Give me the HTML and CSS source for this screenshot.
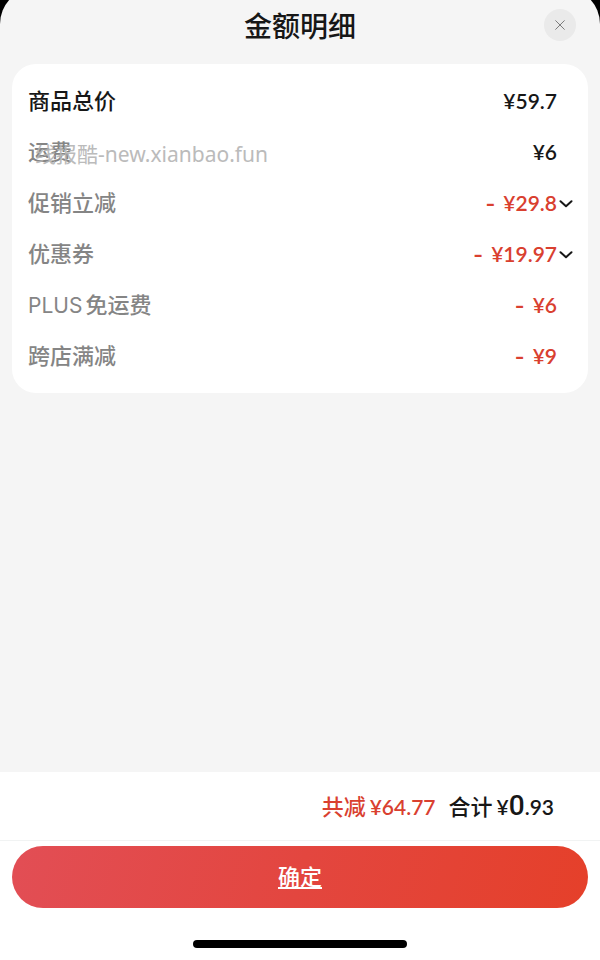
FILE: index.html
```html
<!DOCTYPE html>
<html lang="zh-CN">
<head>
<meta charset="utf-8">
<meta name="viewport" content="width=device-width, initial-scale=1">
<title>金额明细</title>
<link rel="stylesheet" href="styles.css">
</head>
<body>
<main class="sheet">
  <header class="header">
    <h1 class="title">金额明细</h1>
    <button class="close" type="button" aria-label="关闭">
      <svg width="10" height="10" viewBox="0 0 10 10"><path d="M.4.4l9.200 9.200M9.600.4L.4 9.600"/></svg>
    </button>
  </header>

  <dl class="card">
    <div class="row strong"><dt>商品总价</dt><dd>¥59.7</dd></div>
    <div class="row"><dt>运费</dt><dd>¥6</dd><span class="watermark">线报酷-new.xianbao.fun</span></div>
    <div class="row"><dt>促销立减</dt><dd class="off"><span class="minus">-</span>¥29.8</dd>
      <button class="more" type="button" aria-label="展开促销立减"><svg width="14" height="8" viewBox="0 0 14 8"><path d="M1.500 1.200L7 6.200l5.500-5"/></svg></button></div>
    <div class="row"><dt>优惠券</dt><dd class="off"><span class="minus">-</span>¥19.97</dd>
      <button class="more" type="button" aria-label="展开优惠券"><svg width="14" height="8" viewBox="0 0 14 8"><path d="M1.500 1.200L7 6.200l5.500-5"/></svg></button></div>
    <div class="row"><dt class="mixed"><span class="latin">PLUS</span><span>免运费</span></dt><dd class="off"><span class="minus">-</span>¥6</dd></div>
    <div class="row"><dt>跨店满减</dt><dd class="off"><span class="minus">-</span>¥9</dd></div>
  </dl>

  <footer class="footer">
    <div class="totals">
      <p class="total off"><span>共减</span><span class="sum">¥64.77</span></p>
      <p class="total"><span>合计</span><span class="sum">¥<span class="big">0</span>.93</span></p>
    </div>
    <button class="confirm" type="button">确定</button>
    <div class="home"></div>
  </footer>
</main>
</body>
</html>
```
FILE: styles.css
```css
* {
  box-sizing: border-box;
}

body {
  margin: 0;
  overflow-x: hidden;
  background: #000;
  color: #171717;
  font-family: "Noto Sans CJK SC", sans-serif;
  font-size: 22px;
  font-weight: 500;
  line-height: 32px;
}

h1, p, dl, dd {
  margin: 0;
}

button {
  border: 0;
  padding: 0;
  font: inherit;
  cursor: pointer;
}

svg {
  display: block;
  fill: none;
}

.sheet {
  display: flex;
  flex-direction: column;
  min-height: calc(100vh + 12px);
  margin-top: -12px;
  padding-top: 12px;
  border-radius: 36px 36px 0 0;
  background: #f5f5f5;
}

.header {
  display: grid;
  grid-template-columns: 1fr auto 1fr;
  align-items: center;
  height: 50px;
  padding: 0 24px;
}

.title {
  grid-column: 2;
  font-size: 28px;
  font-weight: 500;
  line-height: 40px;
}

.close {
  display: grid;
  place-items: center;
  justify-self: end;
  width: 32px;
  height: 32px;
  border-radius: 50%;
  background: #eaeaea;
}

.close path {
  stroke: #7c7c7c;
  stroke-width: 1;
}

.card {
  margin: 14px 12px;
  padding: 12px 16px 11px;
  border-radius: 24px;
  background: #fff;
}

.row {
  position: relative;
  display: grid;
  grid-template-columns: 1fr auto 15px;
  align-items: center;
  height: 51px;
}

.row dt {
  padding-bottom: 5px;
  color: #858585;
}

.row.strong dt {
  color: #171717;
}

.row dd {
  padding-bottom: 1px;
}

.row dd,
.sum {
  font-family: Lato, sans-serif;
  font-size: 21px;
  font-weight: 600;
}

.off,
.row dd.off {
  color: #d9402f;
}

.minus {
  margin-right: 8px;
  font-family: Inter, sans-serif;
}

.mixed {
  display: flex;
  align-items: baseline;
  gap: 3px;
}

.latin {
  font-family: Inter, sans-serif;
  font-size: 21px;
  font-weight: 400;
  line-height: 24px;
}

.more {
  display: grid;
  place-items: center;
  width: 18px;
  height: 24px;
  background: none;
}

.more path {
  stroke: #171717;
  stroke-width: 2;
  stroke-linecap: round;
  stroke-linejoin: round;
}

.watermark {
  position: absolute;
  top: 11px;
  left: 7px;
  color: #b4b4b4;
  font-family: "Noto Sans", "Noto Sans CJK SC", sans-serif;
  font-size: 21px;
  font-weight: 400;
  opacity: 0.9;
  pointer-events: none;
}

.footer {
  margin-top: auto;
  background: #fff;
}

.totals {
  display: flex;
  align-items: center;
  justify-content: flex-end;
  gap: 13px;
  height: 69px;
  padding: 0 46px 0 12px;
  border-bottom: 1px solid #f1f3f3;
}

.total {
  display: flex;
  align-items: baseline;
  gap: 4px;
}

.big {
  font-family: Roboto, sans-serif;
  font-size: 28px;
  font-weight: 500;
}

.confirm {
  display: block;
  width: calc(100% - 24px);
  height: 62px;
  margin: 5px 12px 32px;
  padding-bottom: 4px;
  border-radius: 31px;
  background: linear-gradient(105deg, #e24e55, #e3463f 50%, #e5402a);
  color: #fff;
  text-decoration: underline;
}

.home {
  width: 214px;
  height: 8px;
  margin: 0 auto 12px;
  border-radius: 4px;
  background: #000;
}
```
